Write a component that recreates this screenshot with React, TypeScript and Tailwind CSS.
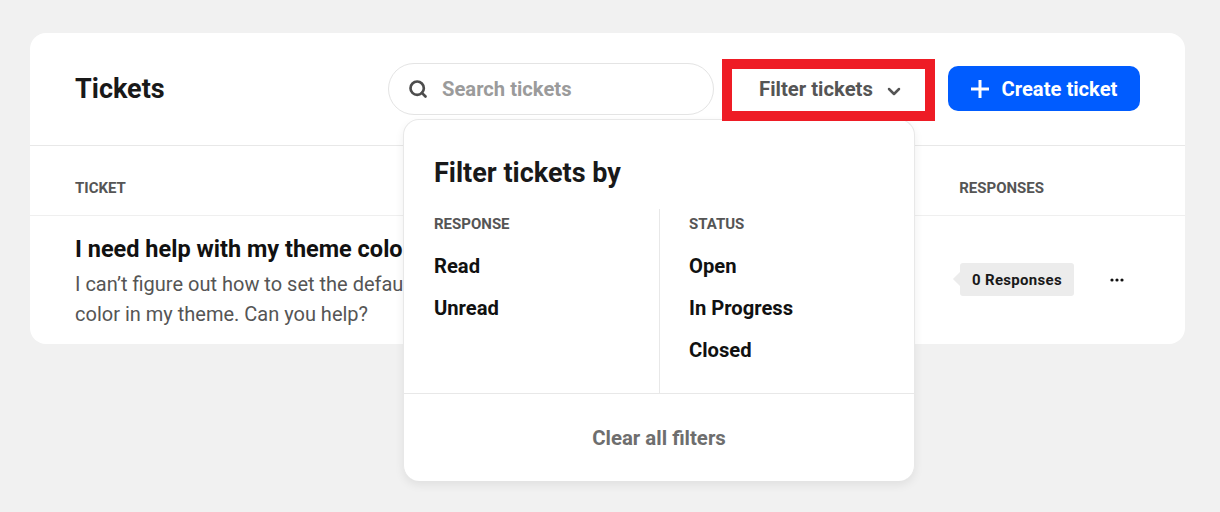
import React from 'react';
import { Search } from 'lucide-react';

const roboto = "font-['Roboto',sans-serif]";

function FilterColumn({ title, items, className }: { title: string; items: string[]; className: string }) {
  return (
    <div className={className}>
      <div className="text-[15px] leading-[16px] font-bold text-[#555] uppercase">{title}</div>
      <ul className="mt-[22px] flex flex-col gap-[18px]">
        {items.map((item) => (
          <li key={item} className="text-[20.2px] leading-[24px] font-bold text-[#111]">{item}</li>
        ))}
      </ul>
    </div>
  );
}

function FilterPopover() {
  return (
    <div className="absolute left-[373px] top-[86px] z-10 w-[512px] h-[362px] flex flex-col rounded-[16px] bg-white border border-[#e8e8e8] border-b-0 shadow-[0_4px_10px_rgba(0,0,0,0.07)]">
      <div className="px-[30px] pt-[36px] text-[27px] leading-[34px] font-bold text-[#191919]">Filter tickets by</div>
      <div className="flex flex-1 mt-[19px]">
        <FilterColumn title="Response" items={['Read', 'Unread']} className="w-[256px] pl-[30px] pt-[7px] border-r border-[#e8e8e8]" />
        <FilterColumn title="Status" items={['Open', 'In Progress', 'Closed']} className="flex-1 pl-[29px] pt-[7px]" />
      </div>
      <div className="h-[88px] border-t border-[#e8e8e8] flex items-center justify-center text-[20.4px] font-bold text-[#6e6e6e]">
        <span className="relative top-[1px]">Clear all filters</span>
      </div>
    </div>
  );
}

export default function App() {
  return (
    <div className={`${roboto} min-h-[512px] bg-[#f1f1f1] pt-[33px] pl-[30px] pr-[35px]`}>
      <div className="relative h-[311px] rounded-[16px] bg-white">
        <div className="h-[113px] flex items-center px-[45px] border-b border-[#e8e8e8]">
          <h1 className="text-[27px] font-bold text-[#191919] mr-auto">Tickets</h1>
          <div className="w-[326px] h-[52px] flex items-center gap-[14px] pl-[19px] rounded-full border border-[#e4e4e4]">
            <Search size={20} strokeWidth={3.2} className="text-[#4d4d4d]" />
            <span className="text-[20.2px] font-bold text-[#9b9b9b]">Search tickets</span>
          </div>
          <div className="relative z-20 ml-[8px] mt-[2px] w-[213px] h-[62px] flex items-center justify-center gap-[14px] pl-[3px] border-[10px] border-[#ee1c25] bg-white">
            <span className="-mt-[2px] text-[20.3px] font-bold text-[#555]">Filter tickets</span>
            <svg className="mt-[2px] text-[#555]" width="14" height="9" viewBox="0 0 14 9" fill="none" stroke="currentColor" strokeWidth="2.5" strokeLinecap="round" strokeLinejoin="round">
              <path d="M2 2l5 5 5-5" />
            </svg>
          </div>
          <div className="ml-[13px] -mt-[1px] w-[192px] h-[45px] flex items-center justify-center gap-[13px] rounded-[10px] bg-[#005cff] text-white">
            <svg width="18" height="18" viewBox="0 0 18 18" fill="none" stroke="currentColor" strokeWidth="3">
              <path d="M9 0v18M0 9h18" />
            </svg>
            <span className="relative top-[1px] text-[20.2px] font-bold">Create ticket</span>
          </div>
        </div>

        <div className="h-[70px] flex items-center justify-between pt-[16px] pl-[45px] pr-[141px] border-b border-[#efefef] text-[15px] font-bold text-[#555] uppercase">
          <span>Ticket</span>
          <span>Responses</span>
        </div>

        <div className="flex items-center pl-[45px] pr-[61px] h-[128px]">
          <div className="w-[500px] mr-auto mt-[3px]">
            <div className="text-[23.5px] leading-[30px] font-bold text-[#111]">I need help with my theme color</div>
            <p className="mt-[5px] text-[20px] leading-[30px] text-[#555] pr-[130px]">I can’t figure out how to set the default color in my theme. Can you help?</p>
          </div>
          <div className="relative -mt-[1px] w-[114px] h-[33px] flex items-center justify-center rounded-[3px] bg-[#ececec] text-[15px] font-bold text-[#191919] tracking-[0.3px]">
            <span className="absolute -left-[5px] top-[11px] w-[10px] h-[10px] rotate-45 bg-[#ececec]" />
            <span className="relative top-[1px]">0 Responses</span>
          </div>
          <svg className="ml-[36px] text-[#111]" width="14" height="4" viewBox="0 0 14 4" fill="currentColor">
            <circle cx="2" cy="2" r="1.6" />
            <circle cx="7" cy="2" r="1.6" />
            <circle cx="12" cy="2" r="1.6" />
          </svg>
        </div>

        <FilterPopover />
      </div>
    </div>
  );
}
